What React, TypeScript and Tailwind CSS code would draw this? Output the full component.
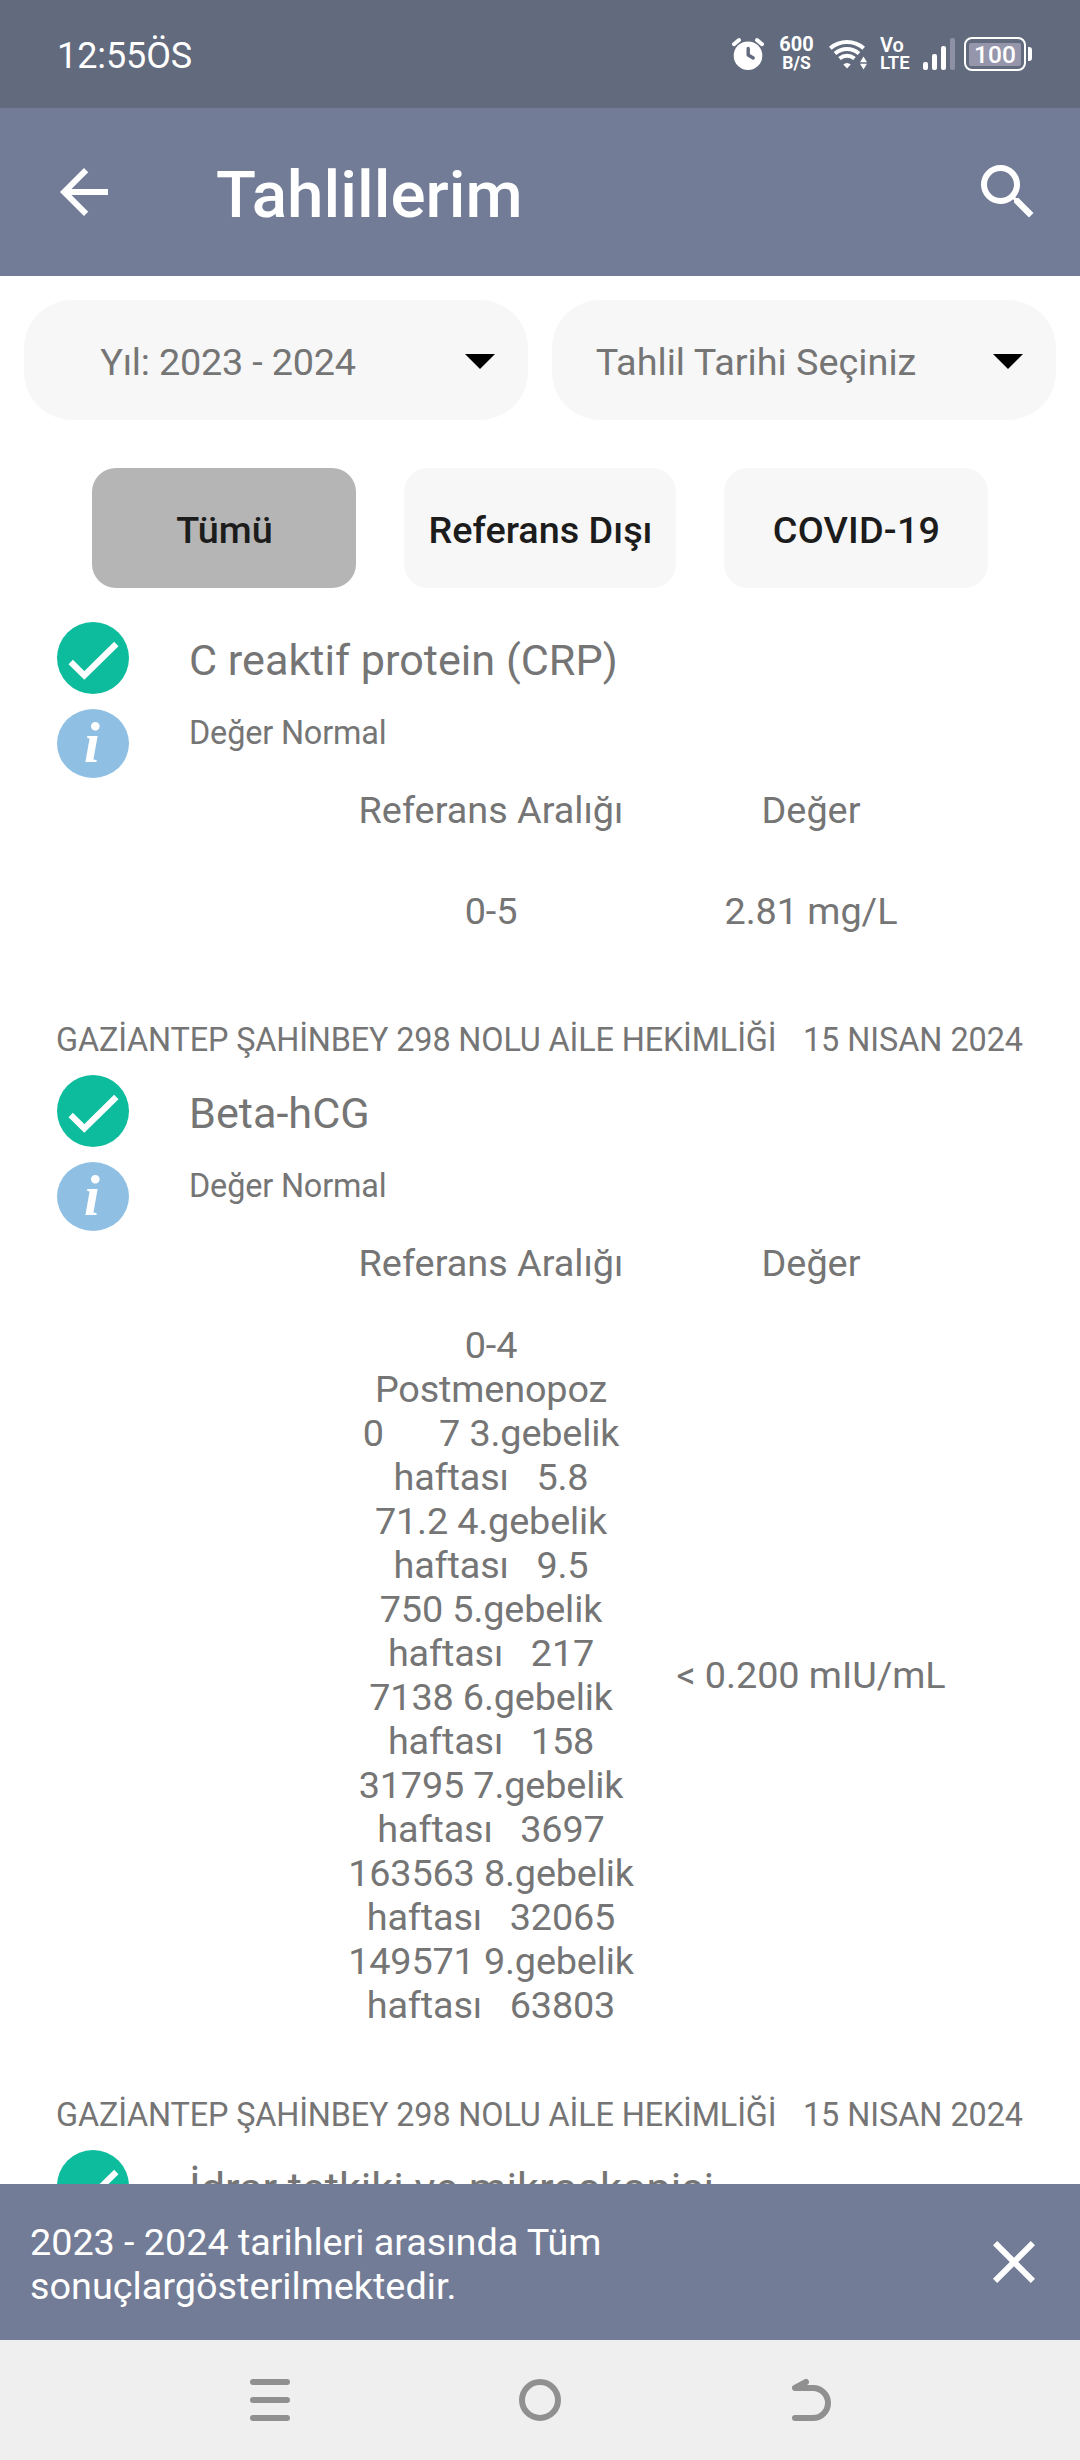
import type { ReactNode } from "react";

type Result = {
  name: string;
  range: string[];
  value: string;
};

const results: Result[] = [
  { name: "C reaktif protein (CRP)", range: ["0-5"], value: "2.81 mg/L" },
  {
    name: "Beta-hCG",
    range: [
      "0-4",
      "Postmenopoz",
      "0      7 3.gebelik",
      "haftası   5.8",
      "71.2 4.gebelik",
      "haftası   9.5",
      "750 5.gebelik",
      "haftası   217",
      "7138 6.gebelik",
      "haftası   158",
      "31795 7.gebelik",
      "haftası   3697",
      "163563 8.gebelik",
      "haftası   32065",
      "149571 9.gebelik",
      "haftası   63803",
    ],
    value: "< 0.200 mIU/mL",
  },
];

function StatusBar() {
  return (
    <div className="flex h-[108px] shrink-0 items-start justify-between bg-[#626a7e] pr-12 pl-[57px] text-white">
      <span className="pt-[34px] text-[36px] leading-[44px] tracking-[-0.1px]">12:55ÖS</span>
      <div className="flex items-start pt-9">
        <svg className="h-[36px] w-[32px]" viewBox="0 0 32 36" fill="none">
          <circle cx="16" cy="19.7" r="14.3" fill="#fff" />
          <path d="M2 8.2 7 4M30 8.2 25 4" stroke="#fff" strokeWidth="4" strokeLinecap="round" />
          <path d="M16.2 12.5V19l5 3" stroke="#626a7e" strokeWidth="3.4" strokeLinecap="round" strokeLinejoin="round" />
        </svg>
        <div className="ml-[15px] flex w-[35px] flex-col items-center font-bold">
          <span className="text-[20px] leading-[16px]">600</span>
          <span className="mt-[2px] text-[17.5px] leading-[18px]">B/S</span>
        </div>
        <svg className="ml-[15px] h-[36px] w-[38px]" viewBox="0 0 38 36" fill="none" stroke="#fff" strokeWidth="4">
          <path d="M1.3 12.2Q8.5 6 18 6t16.7 6.2" />
          <path d="M6 17.5Q11.5 13 18 13t12 4.5" />
          <path d="M10.5 22.5Q14 19.7 18 19.7t7.5 2.8" />
          <path d="M14.3 28.5Q16 27 18 27t3.7 1.5L18 32.5Z" fill="#fff" stroke="none" />
          <path d="M34.5 20.5 38 26.2H31ZM34.5 33.5 38 27.8H31Z" fill="#fff" stroke="none" />
        </svg>
        <div className="ml-[13px] flex w-[31px] flex-col items-start font-semibold">
          <span className="text-[20px] leading-[18px]">Vo</span>
          <span className="text-[18.5px] leading-[18px]">LTE</span>
        </div>
        <svg className="ml-[12px] h-[36px] w-[32px]" viewBox="0 0 32 36" fill="#fff">
          <rect x="0" y="26" width="5" height="8" rx="2" />
          <rect x="9" y="18" width="5" height="16" rx="2" />
          <rect x="18" y="10" width="5" height="24" rx="2" />
          <rect x="27" y="2" width="5" height="32" rx="2" fill="#8e91a6" />
        </svg>
        <div className="mt-[1px] ml-[9px] flex items-center">
          <div className="flex h-[34px] w-[62px] items-center justify-center rounded-[8px] border-2 border-white">
            <div className="flex h-[23px] w-[52px] items-center justify-center rounded-[2px] bg-[#9596ab] text-[24.5px] leading-[23px] font-medium">
              100
            </div>
          </div>
          <div className="ml-[2px] h-[14px] w-[4px] rounded-r-[3px] bg-white" />
        </div>
      </div>
    </div>
  );
}

function Header() {
  return (
    <header className="flex h-[168px] shrink-0 items-start bg-[#737c96] pr-9 pl-12 text-white">
      <svg className="mt-12 size-[72px]" viewBox="0 0 24 24" fill="currentColor">
        <path d="M20 11H7.83l5.59-5.59L12 4l-8 8 8 8 1.41-1.41L7.83 13H20z" />
      </svg>
      <h1 className="mt-[47px] ml-[96px] text-[65.6px] leading-[80px] font-medium">Tahlillerim</h1>
      <svg className="mt-12 ml-auto size-[72px]" viewBox="0 0 24 24" fill="currentColor">
        <path d="M15.5 14h-.79l-.28-.27A6.471 6.471 0 0 0 16 9.5 6.5 6.5 0 1 0 9.5 16c1.61 0 3.09-.59 4.23-1.57l.27.28v.79l5 4.99L20.49 19zm-6 0C7.01 14 5 11.99 5 9.5S7.01 5 9.5 5 14 7.01 14 9.5 11.99 14 9.5 14" />
      </svg>
    </header>
  );
}

function Select({ children }: { children: ReactNode }) {
  return (
    <div className="flex h-[120px] w-[504px] items-center rounded-[48px] bg-[#f7f7f7]">
      <div className="w-[408px] pt-[3px] text-center leading-[44px] text-[#757575]">{children}</div>
      <svg className="ml-3 size-[72px]" viewBox="0 0 24 24" fill="#000">
        <path d="m7 10 5 5 5-5z" />
      </svg>
    </div>
  );
}

function CheckIcon() {
  return (
    <svg className="size-[72px]" viewBox="0 0 72 72" fill="none">
      <circle cx="36" cy="36" r="36" fill="#0dbc9c" />
      <path d="M13.7 40 27.3 53.5 59.3 22" stroke="#fff" strokeWidth="6.2" />
    </svg>
  );
}

function InfoIcon() {
  return (
    <div className="flex h-[69px] w-[72px] justify-center rounded-[50%] bg-[#8fc0e4] pr-[2px] font-['Liberation_Serif',serif] text-[57px] leading-[67px] font-bold text-white italic">
      i
    </div>
  );
}

function ResultTitle({ name, status }: { name: string; status?: string }) {
  return (
    <div className="flex">
      <div className="ml-px flex h-[156px] w-[132px] shrink-0 flex-col gap-[15px]">
        <CheckIcon />
        {status && <InfoIcon />}
      </div>
      <div className="flex flex-col">
        <h2 className="pt-px text-[43.2px] leading-[76px]">{name}</h2>
        {status && <p className="mt-[14px] text-[32.4px] leading-[40px] tracking-[-0.15px]">{status}</p>}
      </div>
    </div>
  );
}

function ResultItem({ result }: { result: Result }) {
  return (
    <section className="flex flex-col px-14 pb-[15px]">
      <ResultTitle name={result.name} status="Değer Normal" />
      <div className="mt-[10px] ml-[275px] grid w-[640px] grid-cols-2 text-center leading-[44px]">
        <span>Referans Aralığı</span>
        <span>Değer</span>
      </div>
      <div className="mt-[38px] ml-[275px] grid min-h-[82px] w-[640px] grid-cols-2 items-center text-center leading-[44px] whitespace-pre">
        <div className="tracking-[-0.15px]">
          {result.range.map((line, i) => (
            <p key={i}>{line}</p>
          ))}
        </div>
        <span className="tracking-[-0.05px]">{result.value}</span>
      </div>
      <div className="mt-[68px] flex justify-between pr-px text-[32.4px] leading-[40px] whitespace-nowrap">
        <span className="tracking-[-0.15px]">GAZİANTEP ŞAHİNBEY 298 NOLU AİLE HEKİMLİĞİ</span>
        <span className="tracking-[-0.05px]">15 NISAN 2024</span>
      </div>
    </section>
  );
}

export default function App() {
  return (
    <div className="flex h-[2460px] w-[1080px] flex-col overflow-hidden bg-white font-['Roboto',sans-serif] text-[37.8px] text-[#757575]">
      <StatusBar />
      <Header />
      <div className="flex shrink-0 gap-6 px-6 pt-6">
        <Select>
          <span className="tracking-[-0.2px]">Yıl: 2023 - 2024</span>
        </Select>
        <Select>Tahlil Tarihi Seçiniz</Select>
      </div>
      <div className="flex shrink-0 gap-12 pt-12 pl-[92px] leading-[44px] font-medium text-[#1c1c1c]">
        <button className="h-[120px] w-[264px] rounded-[24px] bg-[#b5b5b5] pt-[3px] pl-px">Tümü</button>
        <button className="h-[120px] w-[272px] rounded-[24px] bg-[#f7f7f7] pt-[3px] pl-px">Referans Dışı</button>
        <button className="h-[120px] w-[264px] rounded-[24px] bg-[#f7f7f7] pt-[3px] pl-px tracking-[0.2px]">COVID-19</button>
      </div>
      <main className="min-h-0 flex-1 overflow-hidden pt-[34px]">
        {results.map((r) => (
          <ResultItem key={r.name} result={r} />
        ))}
        <section className="px-14">
          <ResultTitle name="İdrar tetkiki ve mikroskopisi" />
        </section>
      </main>
      <div className="flex h-[156px] shrink-0 items-center justify-between bg-[#737c96] px-[30px] text-white">
        <p className="pt-[4px] leading-[44px]">
          <span className="tracking-[-0.05px]">2023 - 2024 tarihleri arasında Tüm</span>
          <br />
          sonuçlargösterilmektedir.
        </p>
        <svg className="size-[72px]" viewBox="0 0 24 24" fill="currentColor">
          <path d="M19 6.41 17.59 5 12 10.59 6.41 5 5 6.41 10.59 12 5 17.59 6.41 19 12 13.41 17.59 19 19 17.59 13.41 12z" />
        </svg>
      </div>
      <nav className="grid h-[120px] shrink-0 grid-cols-3 place-items-center bg-[#efefef] px-[135px]">
        <svg className="size-[48px]" viewBox="0 0 48 48" stroke="#909090" strokeWidth="6" strokeLinecap="round">
          <path d="M7 6H41M7 24H41M7 42H41" />
        </svg>
        <div className="size-[42px] rounded-full border-[6px] border-[#909090]" />
        <svg className="size-[48px]" viewBox="0 0 48 48" fill="none" stroke="#909090" strokeWidth="6" strokeLinecap="round" strokeLinejoin="round">
          <path d="M20 6 9 12H27a15 15 0 0 1 0 30H9" />
        </svg>
      </nav>
    </div>
  );
}
